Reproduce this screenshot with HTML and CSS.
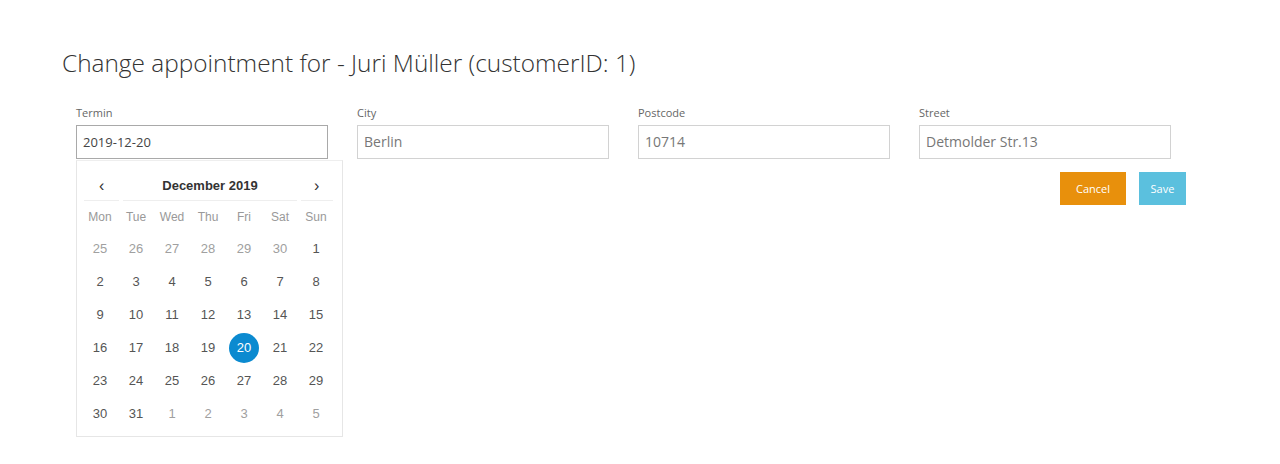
FILE: index.html
```html
<!DOCTYPE html>
<html>
<head>
<meta charset="utf-8">
<link rel="stylesheet" href="styles.css">
</head>
<body>
<div class="page">
  <h1 class="title">Change appointment for - Juri Müller (customerID: 1)</h1>
  <div class="fields">
    <div class="field termin">
      <label class="label">Termin</label>
      <div class="input input-focus">2019-12-20</div>
      <div class="datepicker">
        <div class="dp-head">
          <div class="dp-prev">‹</div>
          <div class="dp-month">December 2019</div>
          <div class="dp-next">›</div>
        </div>
        <div class="dp-grid">
          <div class="dn">Mon</div><div class="dn">Tue</div><div class="dn">Wed</div><div class="dn">Thu</div><div class="dn">Fri</div><div class="dn">Sat</div><div class="dn">Sun</div>
          <div class="d old">25</div><div class="d old">26</div><div class="d old">27</div><div class="d old">28</div><div class="d old">29</div><div class="d old">30</div><div class="d">1</div>
          <div class="d">2</div><div class="d">3</div><div class="d">4</div><div class="d">5</div><div class="d">6</div><div class="d">7</div><div class="d">8</div>
          <div class="d">9</div><div class="d">10</div><div class="d">11</div><div class="d">12</div><div class="d">13</div><div class="d">14</div><div class="d">15</div>
          <div class="d">16</div><div class="d">17</div><div class="d">18</div><div class="d">19</div><div class="d"><span class="sel">20</span></div><div class="d">21</div><div class="d">22</div>
          <div class="d">23</div><div class="d">24</div><div class="d">25</div><div class="d">26</div><div class="d">27</div><div class="d">28</div><div class="d">29</div>
          <div class="d">30</div><div class="d">31</div><div class="d old">1</div><div class="d old">2</div><div class="d old">3</div><div class="d old">4</div><div class="d old">5</div>
        </div>
      </div>
    </div>
    <div class="field">
      <label class="label">City</label>
      <div class="input">Berlin</div>
    </div>
    <div class="field">
      <label class="label">Postcode</label>
      <div class="input">10714</div>
    </div>
    <div class="field">
      <label class="label">Street</label>
      <div class="input">Detmolder Str.13</div>
    </div>
  </div>
  <div class="actions">
    <button class="btn btn-cancel">Cancel</button>
    <button class="btn btn-save">Save</button>
  </div>
</div>
</body>
</html>
```

FILE: styles.css
```css
html, body {
  margin: 0;
  padding: 0;
  background: #ffffff;
}
body {
  font-family: "Open Sans", "Liberation Sans", sans-serif;
  color: #555;
  min-height: 464px;
}
.page {
  box-sizing: border-box;
  min-height: 464px;
  padding: 47px 0 0 62px;
  width: 1186px;
}
.title {
  margin: 0;
  font-size: 24.4px;
  line-height: 32px;
  font-weight: 300;
  color: #333;
}
.fields {
  display: grid;
  grid-template-columns: repeat(4, 252px);
  column-gap: 29px;
  padding-left: 14px;
  margin-top: 26px;
}
.field {
  position: relative;
  display: flex;
  flex-direction: column;
}
.label {
  font-size: 11px;
  line-height: 15px;
  color: #666;
  margin-bottom: 5px;
}
.input {
  box-sizing: border-box;
  height: 34px;
  border: 1px solid #d2d2d2;
  padding: 0 6px;
  font-size: 14px;
  line-height: 32px;
  color: #777;
}
.input-focus {
  border-color: #a9a9a9;
  font-size: 13px;
  color: #444;
}
.actions {
  display: flex;
  justify-content: flex-end;
  gap: 13px;
  margin-top: 13px;
}
.btn {
  height: 33px;
  border: none;
  color: #fff;
  font-family: "Open Sans", "Liberation Sans", sans-serif;
  font-size: 11px;
  padding: 0;
}
.btn-cancel {
  background: #e8900c;
  width: 66px;
}
.btn-save {
  background: #5bc0de;
  width: 47px;
}
.datepicker {
  position: absolute;
  top: 100%;
  left: 0;
  z-index: 10;
  box-sizing: border-box;
  width: 267px;
  margin-top: 1px;
  border: 1px solid #e6e6e6;
  border-top-color: #eeeeee;
  background: #fff;
  padding: 10px 9px 6px 5px;
  font-family: "Liberation Sans", Arial, sans-serif;
}
.dp-head {
  display: flex;
  height: 30px;
  padding-left: 2px;
  gap: 4px;
}
.dp-head > div {
  border-bottom: 1px solid #eeeeee;
  display: flex;
  align-items: center;
  justify-content: center;
  color: #333;
}
.dp-prev {
  width: 36px;
  font-size: 16px;
}
.dp-month {
  width: 176px;
  font-size: 13px;
  font-weight: bold;
}
.dp-next {
  width: 33px;
  font-size: 16px;
}
.dp-grid {
  display: grid;
  grid-template-columns: repeat(7, 36px);
  grid-template-rows: 31px repeat(6, 33px);
}
.dn, .d {
  display: flex;
  align-items: center;
  justify-content: center;
  font-size: 12px;
}
.dn {
  color: #999;
}
.d {
  font-size: 13px;
  color: #555;
}
.d.old {
  color: #a0a0a0;
}
.sel {
  width: 30px;
  height: 30px;
  border-radius: 50%;
  background: #0b8ad0;
  color: #fff;
  display: flex;
  align-items: center;
  justify-content: center;
}
```
